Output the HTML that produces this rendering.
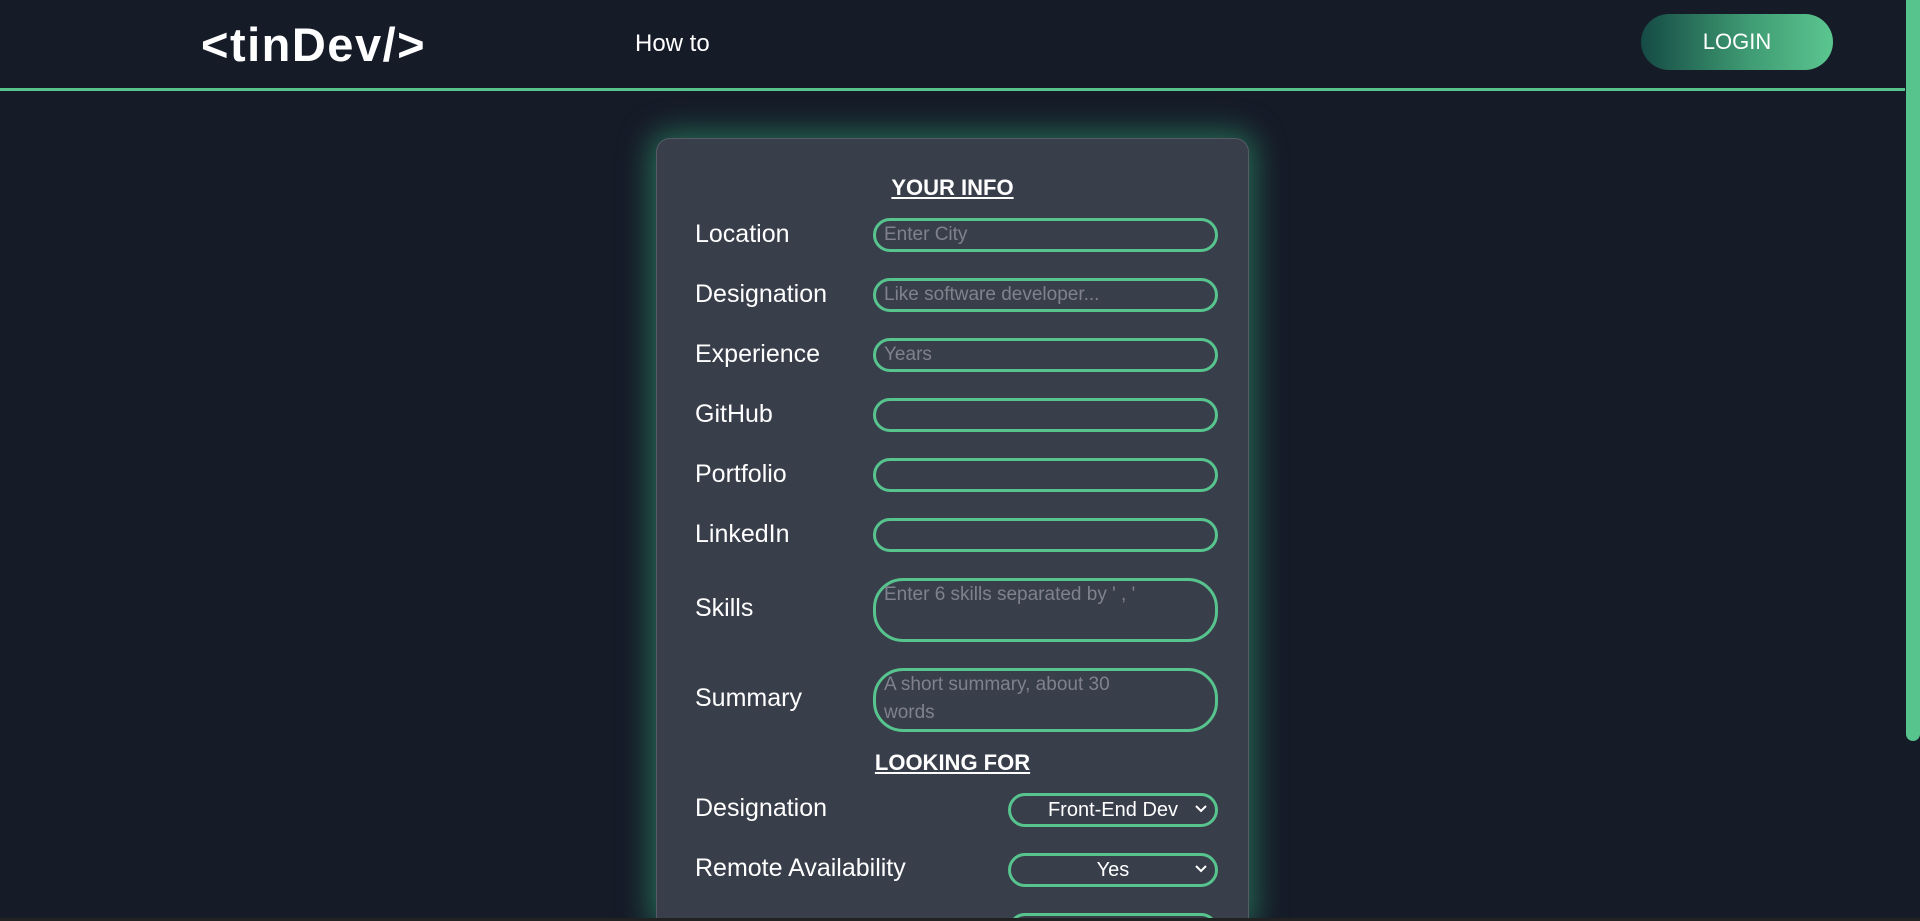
<!DOCTYPE html>
<html><head><meta charset="utf-8"><style>
*{box-sizing:border-box;margin:0;padding:0}
html,body{width:1920px;height:921px;overflow:hidden;background:#161b28;font-family:"Liberation Sans",sans-serif;color:#fff}
.wrap{position:absolute;left:0;top:0;width:1920px;height:921px;overflow:hidden}
.hdr{position:absolute;left:0;top:0;width:1905px;height:91px;border-bottom:3px solid #57c48e}
.logo{position:absolute;left:201px;top:17px;font-size:47px;font-weight:bold;letter-spacing:1.5px}
.how{position:absolute;left:635px;top:30px;font-size:24px}
.login{position:absolute;left:1641px;top:14px;width:192px;height:56px;border-radius:28px;background:linear-gradient(90deg,#154a45,#3e9a72 55%,#5bc690);font-size:22px;text-align:center;line-height:56px}
.sb{position:absolute;left:1906px;top:0;width:14px;height:741px;background:#57c48e;border-radius:0 0 7px 7px}
.card{position:absolute;left:656px;top:138px;width:593px;height:783px;background:#393e4b;border:1px solid #565b66;border-bottom:none;border-radius:14px 14px 0 0;box-shadow:0 0 30px 6px rgba(50,170,120,.55)}
.h{position:absolute;left:0;width:100%;text-align:center;font-size:22px;font-weight:bold;text-decoration:underline}
.lb{position:absolute;left:38px;font-size:25px}
.in{position:absolute;left:216px;width:345px;height:34px;border:3px solid #57c48e;border-radius:17px;color:#7f828c;font-size:19px;padding-left:8px;line-height:28px}
.ta{height:64px;line-height:28px;border-radius:30px}
.sel{position:absolute;left:351px;width:210px;height:34px;border:3px solid #57c48e;border-radius:17px;font-size:20px;text-align:center;line-height:28px}
.sel svg{position:absolute;right:8px;top:9px}
.bot{position:absolute;left:0;top:918px;width:1920px;height:3px;background:#222}
</style></head><body><div class="wrap">
<div class="hdr">
<div class="logo">&lt;tinDev/&gt;</div>
<div class="how">How to</div>
<div class="login">LOGIN</div>
</div>
<div class="sb"></div>
<div class="card">
<div class="h" style="top:36px">YOUR INFO</div>
<div class="lb" style="top:81px">Location</div><div class="in" style="top:79px">Enter City</div>
<div class="lb" style="top:141px">Designation</div><div class="in" style="top:139px">Like software developer...</div>
<div class="lb" style="top:201px">Experience</div><div class="in" style="top:199px">Years</div>
<div class="lb" style="top:261px">GitHub</div><div class="in" style="top:259px"></div>
<div class="lb" style="top:321px">Portfolio</div><div class="in" style="top:319px"></div>
<div class="lb" style="top:381px">LinkedIn</div><div class="in" style="top:379px"></div>
<div class="lb" style="top:455px">Skills</div><div class="in ta" style="top:439px">Enter 6 skills separated by ' , '</div>
<div class="lb" style="top:545px">Summary</div><div class="in ta" style="top:529px">A short summary, about 30<br>words</div>
<div class="h" style="top:611px">LOOKING FOR</div>
<div class="lb" style="top:655px">Designation</div><div class="sel" style="top:654px">Front-End Dev<svg width="12" height="8" viewBox="0 0 12 8"><path d="M1 1l5 5 5-5" stroke="#fff" stroke-width="2" fill="none"/></svg></div>
<div class="lb" style="top:715px">Remote Availability</div><div class="sel" style="top:714px">Yes<svg width="12" height="8" viewBox="0 0 12 8"><path d="M1 1l5 5 5-5" stroke="#fff" stroke-width="2" fill="none"/></svg></div>
<div class="sel" style="top:774px"></div>
</div>
<div class="bot"></div>
</div></body></html>
